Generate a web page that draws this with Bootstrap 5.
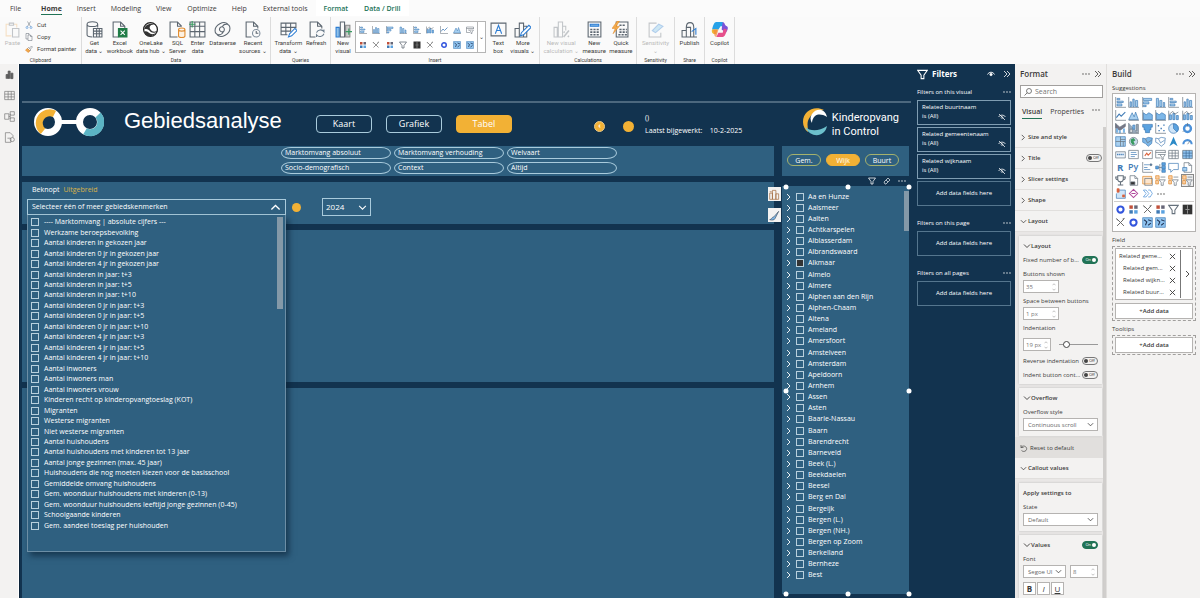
<!DOCTYPE html>
<html lang="nl">
<head>
<meta charset="utf-8">
<meta name="viewport" content="width=device-width, initial-scale=1">
<title>Gebiedsanalyse</title>
<link href="https://cdn.jsdelivr.net/npm/bootstrap@5.3.0/dist/css/bootstrap.min.css" rel="stylesheet">
<style>
:root{--navy:#12334f;--panel:#2f6080;--amber:#f2b135;--ice:#a9cbdc;--pane:#f3f2f1;--ink:#3b3a39;--green:#217356}
body{font:7px/10px "Open Sans","Noto Sans",sans-serif;color:var(--ink);background:var(--pane)}
button,input,select{font:inherit;color:inherit;margin:0}
button{background:none;border:0;padding:0}
svg{display:block;flex:none;fill:none;stroke:currentColor}
.ic-s{width:8px;height:8px}.ic-m{width:11px;height:11px}.ic-l{width:17px;height:17px}
.work{min-height:0}
/* ribbon */
.ribbon-tabs{background:#fbfbfb;padding-left:2px;height:17px}
.ribbon-tabs button{padding:2px 8px 0;height:16px;position:relative}
.ribbon-tabs .on{font-weight:700;padding-right:7px}
.ribbon-tabs .on::after{content:"";position:absolute;left:8px;right:7px;bottom:1px;height:1px;background:var(--green)}
.ribbon-tabs .tight{padding-right:7px}
.ribbon-tabs .ctx{color:var(--green);font-weight:600;background:#fff}
.ribbon{background:#fafafa;height:47px;font:6px/8px Roboto,sans-serif}
.ribbon svg{stroke:#5c6670}
.grp{border-right:1px solid #dcdcdc;height:47px;flex:none}
.grp-body{height:40px;padding-top:4px}
.grp-name{font-size:5px;line-height:6px;text-align:center}
.g-clip{width:82px}.g-data{width:189px}.g-query{width:60px}.g-ins{width:209px}.g-calc{width:97px}.g-sens{width:38px}.g-one{width:30px}
.tool{display:flex;flex-direction:column;align-items:center;text-align:center;gap:1px;white-space:nowrap}
.dim{opacity:.35}
.gallery{border:1px solid #b5b5b5;width:131px;height:32px;background:#fff}
.gallery-grid{display:grid;grid-template-columns:repeat(9,1fr);flex:1;place-items:center}
.gallery-more{border-left:1px solid #b5b5b5;width:8px}
/* rail */
.rail{width:19px;padding-top:5px;gap:10px;border-right:1px solid #fff;color:#777}
/* report canvas */
.canvas{background:var(--navy);color:#fff;padding-left:2px;border-left:1px solid #0b2238}
.canvas-top{height:39px;border-bottom:2px solid #4c687e}
.head{height:43px;padding:0 12px 0 12px}
.head h1{font:22px/28px "Liberation Sans",Arial,sans-serif;margin:0 0 0 20px;width:192px}
.pill-btn{width:56px;height:18px;border:1px solid var(--ice);border-radius:4px;font-size:9px;line-height:14px;margin:8px 14px 0 0}
.pill-btn.on{background:var(--amber);border-color:var(--amber)}
.dot{border-radius:50%;background:var(--amber);width:11px;height:11px;flex:none}
.dot.lined{border:1px solid #e8c98a;line-height:8px;font-weight:700}
.dot.tiny{width:9px;height:9px;margin-left:6px}
.dots{margin:10px 0 0 68px;gap:18px}
.upd{margin:8px 0 0 11px;line-height:13px}
.logo-text{font:11px/14px Roboto,sans-serif;padding-top:4px}
.rightcol{width:127px;flex:none;margin-right:2px}
.tile{background:var(--panel)}
.stack{gap:6px}
.chips{height:30px;padding:1px 0 0 259px}
.chips-grid{display:grid;grid-template-columns:repeat(3,110px);gap:3px}
.chips button{border:1px solid var(--ice);border-radius:10px/6px;height:12px;line-height:10px;text-align:left;padding-left:3px}
.pick{height:42px;padding:2px 5px}
.pick-tabs{padding:1px 0 0 1px}
.pick .adv{color:#d9b24a}
.pick-row{margin-top:3px}
.field-drop{width:259px;height:16px;border:1px solid var(--ice);padding:0 4px}
.fields-menu{position:absolute;top:100%;left:0;width:259px;height:337px;background:var(--panel);border:1px solid #6c8ea5;border-top:0;box-shadow:3px 4px 6px rgba(8,30,50,.6);z-index:5;padding:2px 2px 20px 3px}
.fields-list{display:grid;grid-auto-rows:1fr;height:314px;flex:1}
.fields-list label,.tree label{display:flex;align-items:center;white-space:nowrap;min-height:0}
.fields-list label{gap:5px}
.bar{width:6px;height:92px;background:#8499a8}
input.box{appearance:none;width:8px;height:8px;border:1px solid #b8d0dd;flex:none}
input.box:checked{background:#333}
.year{appearance:none;background:none;border:1px solid var(--ice);width:49px;height:18px;padding:0 3px;color:#fff;font-size:8px;border-radius:0}
.year-wrap{margin-left:21px}
.mid{flex:152 1 0}.low{flex:210 1 0}
.lvl{height:30px;gap:5px;padding:0 5px 2px}
.lvl button{width:34px;height:12px;border:1px solid #a5b26d;border-radius:6px;line-height:9px}
.lvl .on{background:var(--amber);border-color:var(--amber)}
.visbar{height:10px;gap:7px;padding:0 3px}
.tree{display:grid;grid-auto-rows:1fr;height:390px;margin-top:5px}
.tree label{gap:3px;padding-left:3px}
.tree label span{padding-left:1px}
.handles{position:absolute;inset:1px 0 0 4px;pointer-events:none}
.hd{position:absolute;width:5px;height:5px;border-radius:50%;background:#fff;transform:translate(-50%,-50%)}
.tree-bar{position:absolute;right:0;top:5px;width:5px;height:40px;background:#8499a8}
.float-ic{position:absolute;right:-7px;top:5px;gap:7px;z-index:4}
.float-ic button{width:13px;height:14px;background:#f3f2f1;color:#555}
/* filters */
.filters{width:104px;background:var(--navy);color:#fff;padding:4px 4px 0 6px;font-size:6px;line-height:9px}
.filters h2{font-size:8px;line-height:12px;font-weight:700;margin:0}
.fcard{border:1px solid #7f9db2;height:25px;padding:2px 4px;margin-bottom:2px}
.fdrop{border:1px solid #55768e;height:25px;width:100%;display:block}
.fsec{height:16px;padding-top:4px}
.fsec.later{margin-top:9px}
/* panes */
.pane{padding:4px 0 0 5px;font-size:6px;line-height:8px}
.pane h2{font-size:8px;line-height:12px;font-weight:600;margin:0}
.fmt{width:92px;border-right:1px solid #e1dfdd}
.search{height:13px;border:1px solid #a19f9d;background:#fff;margin:5px 3px 0 0;padding:0 3px;font-size:7px;gap:3px}
.search input,.spin input{border:0;background:none;padding:0;min-width:0;outline:0}
.ftabs{font-size:7px;height:29px;gap:8px;padding:8px 2px 0}
.ftabs button{padding:0 0 1px;height:13px;line-height:10px;border-bottom:1px solid transparent}
.ftabs .on{font-weight:600;border-bottom:1px solid var(--green)}
.fbody{margin-left:-5px;border-right:3px solid #d0cecc}
.sec{height:21px;width:100%;padding:0 1px 0 5px;font-weight:600;gap:1px;border-bottom:1px solid #e1dfdd}
.chv{width:7px;height:7px}
.well{background:#e9e7e6;padding:4px 1px 1px 4px;display:grid;gap:4px}
.fcard2{background:var(--pane);box-shadow:0 0 2px #bbb;padding:6px 4px 5px}
.spin{border:1px solid #b5b3b1;background:#fff;height:13px;width:36px;padding:0 2px;color:#777}
.spin.sm{width:28px}
.tick{width:4px;height:5px}
.sel{appearance:none;border:1px solid #b5b3b1;background:#fff;height:13px;width:100%;padding:0 4px;color:#666;border-radius:0;display:block}
.selwrap{position:relative}.selwrap svg{position:absolute;right:4px;top:3px;width:7px;height:7px}
.year-wrap svg{width:9px;height:9px;top:5px}
.tgl{width:16px;height:8px;border:1px solid #777;border-radius:4px;font-size:4px;line-height:6px;padding:0 1px;gap:1px}
.tgl input{appearance:none;width:4px;height:4px;border-radius:50%;background:#444}
.tgl.on{background:var(--green);border-color:var(--green);color:#fff;flex-direction:row-reverse}.tgl.on input{background:#fff}
.rng{appearance:none;background:linear-gradient(#999,#999) center/100% 1px no-repeat;height:9px;width:39px}
.rng::-webkit-slider-thumb{appearance:none;width:7px;height:7px;border:1px solid #444;border-radius:50%;background:#fff}
.lab{height:12px;line-height:12px;margin-top:2px}
.lab.first{margin-top:4px}
.gap-row{margin-top:6px}
.fs-btn{width:13px;height:13px;border:1px solid #b5b3b1;background:#fff;font-size:8px;line-height:10px}
.fs-row{gap:1px}
.reset{background:#e1dfdd;height:21px;padding-left:5px;gap:2px;width:100%}
.build{width:93px;padding-right:4px}
.build .sugg svg{stroke:#66717c}
.sugg{background:#fff;border:1px solid #b5b3b1;height:139px;padding:2px 1px;margin-top:1px}
.sugg-grid{display:grid;grid-template-columns:repeat(6,1fr);grid-auto-rows:1fr;place-items:center}
.g8{flex:8}.g2{flex:2;border-top:1px solid #d0cecc;margin-top:1px;padding-top:1px}
.chosen{outline:1px solid #888;background:#eee}
.wname{margin:4px 0 2px}
.dash{border:1px dashed #a19f9d;padding:1px 2px}
.wbox{border:1px solid #b5b3b1;background:#fff;width:100%}
.wbox + .add{margin-top:3px}
.add{height:16px;font-weight:600}
.rel{height:12px;padding:0 4px 0 3px}.rel.sub{padding-left:7px}.rel svg{width:7px;height:7px}
#rel{border-right:1px solid #777;margin:1px 3px 1px 0}
</style>
</head>
<body class="vh-100 overflow-hidden d-flex flex-column">
<svg class="d-none">
<symbol id="paste" viewBox="0 0 16 16"><path d="M5 3H2v11h5M9 3h3v3" stroke="#f0b060"/><path d="M5 2h4v2H5zM8 7h6v8H8z"/></symbol>
<symbol id="cut" viewBox="0 0 16 16"><path d="M5 1l6 10M11 1L5 11"/><circle cx="4" cy="13" r="2" stroke="#2b7cd3"/><circle cx="12" cy="13" r="2" stroke="#2b7cd3"/></symbol>
<symbol id="copy" viewBox="0 0 16 16"><path d="M6 12H2V1h6v3M6 4h5l3 3v8H6zM11 4v3h3"/></symbol>
<symbol id="brush" viewBox="0 0 16 16"><path d="M9 6l4-4 2 2-4 4M7 5l5 5-2 2-5-5z"/><path d="M5 7l-4 3 5 5 4-3z" fill="#f2a94a" stroke="#d97b1e"/></symbol>
<symbol id="db" viewBox="0 0 16 16"><path d="M1 3c0-3 10-3 10 0s-10 3-10 0v10c0 1 2 2 5 2M11 3v3"/><path d="M7 7h8v8H7zM7 9.500h8M7 12h8M10 7v8M12.500 7v8"/></symbol>
<symbol id="excel" viewBox="0 0 16 16"><path d="M7 15H2V1h7l4 4v2M9 1v4h4"/><path d="M7 7h8v8H7z" fill="#1e7b45" stroke="#1e7b45"/><path d="M9 9l4 4M13 9l-4 4" stroke="#fff"/></symbol>
<symbol id="lake" viewBox="0 0 16 16"><circle cx="8" cy="8" r="6.500" stroke="#222" stroke-width="1.200" fill="#fff"/><path d="M2 8c1-5 6-6 11-5-5 0-7 2-5 5 2 3 5 2 7 1-2 3-5 2-7 1-2-2-3-3-6-2z" fill="#333" stroke="none"/><path d="M2 10c3-1 4 1 6 2s4 0 5-1c-2 4-9 5-11-1z" fill="#333" stroke="none"/></symbol>
<symbol id="sql" viewBox="0 0 16 16"><path d="M8 15H1V1h7l4 4M8 1v4h4"/><path d="M9 8c0-2 6-2 6 0s-6 2-6 0v6c0 2 6 2 6 0V8" stroke="#e08a2c" fill="#fdf1e2"/></symbol>
<symbol id="enter" viewBox="0 0 16 16"><path d="M1 1h14v14H1zM1 5h14M1 10h14M5.500 1v14M10 1v14"/><path d="M3 0v6M0 3h6" stroke="#3a9a61"/></symbol>
<symbol id="dverse" viewBox="0 0 16 16"><path d="M13 3C9-1 1 4 1 9c0 5 6 5 8 1 2-3-1-6-3-4s0 5 3 4M3 13c4 4 12-1 12-6s-5-5-7-2"/></symbol>
<symbol id="recent" viewBox="0 0 16 16"><path d="M7 15H2V1h7l4 4v2M9 1v4h4"/><circle cx="11.500" cy="11.500" r="3.500" stroke="#7d8b99"/><path d="M11.500 9.500v2h2"/></symbol>
<symbol id="transform" viewBox="0 0 16 16"><path d="M7 13H1V2h14v5M1 6h14M1 9.500h9M5.500 2v11M10 2v8"/><path d="M8 15l1-3 5-5 2 2-5 5z" stroke="#2b7cd3" fill="#fff"/></symbol>
<symbol id="refresh" viewBox="0 0 16 16"><path d="M7 15H2V1h7l4 4v2M9 1v4h4"/><path d="M8 11a4 4 0 0 1 7-1v-2M15 12a4 4 0 0 1-7 1v2" stroke="#6b7c8c"/></symbol>
<symbol id="newvis" viewBox="0 0 16 16"><path d="M1 6h3v9H1z" fill="#8fc0e8" stroke="#2b7cd3"/><path d="M5 1h4v14H5z"/><path d="M10 4h4v11h-4z" stroke="#888" fill="#ccc"/><path d="M13 7v6M10 10h6" stroke="#3a9a61"/></symbol>
<symbol id="visedit" viewBox="0 0 16 16"><path d="M1 6h4v9H1zM5 2h5v13H5zM10 7h4v8h-4zM1 4h3" stroke="#a0683a"/></symbol>
<symbol id="newcalc" viewBox="0 0 16 16"><path d="M1 6h3v9H1zM5 1h4v14H5zM9 5h3v4"/><path d="M10 15l5-6M10 10l1 1M14 14l1 1" stroke-width="1.500"/></symbol>
<symbol id="textbox" viewBox="0 0 16 16"><path d="M1 2h14v12H1z"/><path d="M5 12l3-8 3 8M6 9h4" stroke="#2b7cd3"/></symbol>
<symbol id="morevis" viewBox="0 0 16 16"><path d="M1 7h4v8H1zM5 2h4v13H5zM9 5h3v10H9z"/><path d="M6 14l1-3 7-7 2 2-7 7z" stroke="#2b7cd3" fill="#fff"/></symbol>
<symbol id="paint" viewBox="0 0 16 16"><path d="M1 14c3 0 3-4 6-4l7-8-5 10c-1 3-5 3-8 2z" fill="#7db7e8" stroke="#456"/></symbol>
<symbol id="calc" viewBox="0 0 16 16"><path d="M2 1h12v14H2z"/><path d="M4 3h8v2H4z" fill="#7db7e8" stroke="#2b7cd3"/><path d="M4 8h8M4 10.500h8M4 13h8" stroke-dasharray="2 1" stroke-width="1.500"/></symbol>
<symbol id="quick" viewBox="0 0 16 16"><path d="M4 1h11v14H4z"/><path d="M7 4h6M7 8h7M7 10.500h7M6 13h8" stroke-dasharray="2 1" stroke-width="1.500"/><path d="M5 0L0 7h3l-2 5 6-7H4l3-5z" fill="#f2a94a" stroke="#e08a2c" stroke-width=".5"/></symbol>
<symbol id="sens" viewBox="0 0 16 16"><path d="M9 2H2v13h11v-4"/><path d="M5 9l6-6 4 2-7 6z" fill="#7cc4ea" stroke="#2b7cd3"/></symbol>
<symbol id="publish" viewBox="0 0 16 16"><path d="M1 9h4v6H1zM5 6h4v9H5zM5 6c0-6 7-6 7 0v9H9M12 15h3"/><path d="M10 10l4-3v6" stroke="#2b7cd3"/></symbol>
<symbol id="copilot" viewBox="0 0 16 16"><g stroke="none"><path d="M5 1h6l2 4H9L7 8H1c1-4 2-7 4-7z" fill="#27a2e8"/><path d="M1 8h5l-1 4c-3 1-5-1-4-4z" fill="#f2b934"/><path d="M11 1c2 0 2 4 4 4 2 1 0 5-1 6l-4-3z" fill="#7b52d8"/><path d="M15 8c-1 4-2 7-4 7H5l2-4h4l1-4z" fill="#e6508c"/><path d="M2 8l5 0-2 7c-2 0-2-3-3-7z" fill="#f2893a" opacity=".7"/></g></symbol>
<symbol id="funnel" viewBox="0 0 16 16"><path d="M1 2h14L10 9v5H6V9z" stroke-width="1.500"/></symbol>
<symbol id="chev-d" viewBox="0 0 16 16"><path d="M2 5l6 6 6-6" stroke-width="1.800"/></symbol>
<symbol id="chev-u" viewBox="0 0 16 16"><path d="M2 11l6-6 6 6" stroke-width="1.800"/></symbol>
<symbol id="chev-r" viewBox="0 0 16 16"><path d="M4 2l6 6-6 6" stroke-width="1.800"/></symbol>
<symbol id="dbl" viewBox="0 0 16 16"><path d="M2 2l6 6-6 6M8 2l6 6-6 6" stroke-width="1.600"/></symbol>
<symbol id="more" viewBox="0 0 16 16"><g fill="currentColor" stroke="none"><circle cx="2" cy="8" r="1.300"/><circle cx="8" cy="8" r="1.300"/><circle cx="14" cy="8" r="1.300"/></g></symbol>
<symbol id="eye" viewBox="0 0 16 16"><path d="M1 9c3-6 11-6 14 0" stroke-width="1.800"/><circle cx="8" cy="9" r="2.500" fill="currentColor"/></symbol>
<symbol id="eyeoff" viewBox="0 0 16 16"><path d="M1 8c3-5 11-5 14 0M2 2l12 12" stroke-width="1.500"/><circle cx="8" cy="9" r="2"/></symbol>
<symbol id="erase" viewBox="0 0 16 16"><path d="M2 10l8-8 4 4-8 8H4zM6 6l4 4" stroke-width="1.300"/></symbol>
<symbol id="lens" viewBox="0 0 16 16"><circle cx="10" cy="6" r="5" stroke-width="1.300"/><path d="M6.500 9.500L1 15" stroke-width="1.300"/></symbol>
<symbol id="undo" viewBox="0 0 16 16"><path d="M2 2v5h5M2 7c5-7 15 0 10 6-3 3-7 2-9 0" stroke-width="1.300"/></symbol>
<symbol id="xx" viewBox="0 0 16 16"><path d="M2 2l12 12M14 2L2 14" stroke-width="2"/></symbol>
<symbol id="rail1" viewBox="0 0 16 16"><path d="M3 14V8h3v6M6 14V3h3v11M10 14V6h3v8z" fill="#666" stroke="#555"/></symbol>
<symbol id="rail3" viewBox="0 0 16 16"><path d="M1 4h6v8H1zM9 1h6v5H9zM9 10h6v5H9zM7 8h2M9 4v8"/></symbol>
<symbol id="rail4" viewBox="0 0 16 16"><path d="M10 15H2V1h7l4 4v3M5 9h5v6"/><circle cx="12" cy="11" r="3"/></symbol>
<symbol id="bh" viewBox="0 0 16 16"><path d="M1 0v15h15"/><path d="M3 2h4v2H3zM3 6h9v2H3zM3 10h7v3H3z" fill="#a8d0f0" stroke="#3f7ab5"/></symbol>
<symbol id="bv" viewBox="0 0 16 16"><path d="M1 0v15h15"/><path d="M3 7h2v7H3zM7 3h2v11H7zM11 5h3v9h-3z" fill="#a8d0f0" stroke="#3f7ab5"/></symbol>
<symbol id="bh2" viewBox="0 0 16 16"><path d="M1 0v15"/><path d="M2 2h12v3H2zM2 7h8v3H2zM2 12h4v2H2z" fill="#a8d0f0" stroke="#3f7ab5"/></symbol>
<symbol id="bv2" viewBox="0 0 16 16"><path d="M1 15h15"/><path d="M2 2h3v12H2zM7 5h3v9H7zM12 8h2v6h-2z" fill="#a8d0f0" stroke="#3f7ab5"/></symbol>
<symbol id="line" viewBox="0 0 16 16"><path d="M1 0v15h15"/><path d="M2 11l4-5 3 3 6-6" stroke="#3f7ab5" stroke-width="1.500"/></symbol>
<symbol id="area" viewBox="0 0 16 16"><path d="M1 14l5-10 3 6 2-7 4 11z" fill="#a8d0f0" stroke="#3f7ab5"/><path d="M1 15h15"/></symbol>
<symbol id="area2" viewBox="0 0 16 16"><path d="M2 4l4 3 4-3 5 3v7H2z" fill="#7db7e8" stroke="#3f7ab5"/><path d="M1 0v15h15"/></symbol>
<symbol id="combo" viewBox="0 0 16 16"><path d="M2 7h3v7H2zM7 5h3v9H7zM12 8h3v6h-3z" fill="#7db7e8" stroke="#3f7ab5"/><path d="M1 15V1M2 6l5-4 3 4 5-3"/></symbol>
<symbol id="ribb" viewBox="0 0 16 16"><path d="M1 1l6 5 8-5v4l-8 6-6-4z" fill="#778"/><path d="M3 8v6M7 11v4M13 8v6" stroke="#7db7e8" stroke-width="3"/><path d="M1 0v15h15"/></symbol>
<symbol id="wfall" viewBox="0 0 16 16"><path d="M1 0v15h15M3 9h3v5H3zM12 2h3v12h-3z" fill="#9ab"/><path d="M7 3h3v6H7z" fill="#7db7e8" stroke="#3f7ab5"/></symbol>
<symbol id="fun" viewBox="0 0 16 16"><path d="M1 2h14v4h-2v4h-2v4H5v-4H3V6H1z" fill="#5aa2e0" stroke="#3f7ab5"/></symbol>
<symbol id="scat" viewBox="0 0 16 16"><path d="M1 0v15h15"/><path d="M4 4h2M8 8h2M12 3h2M5 11h2M12 11h2" stroke="#3f7ab5" stroke-width="2"/></symbol>
<symbol id="pie" viewBox="0 0 16 16"><circle cx="8" cy="8" r="7" fill="#cfe5f8" stroke="#3f7ab5"/><path d="M8 8V1a7 7 0 0 1 5 12z" fill="#5aa2e0" stroke="#3f7ab5"/></symbol>
<symbol id="donut" viewBox="0 0 16 16"><circle cx="8" cy="8" r="5" stroke="#4a90d9" stroke-width="3.500"/><path d="M8 0v5M3 11l-2 2"/></symbol>
<symbol id="treemap" viewBox="0 0 16 16"><path d="M1 1h14v14H1z" fill="#a8d0f0" stroke="#3f7ab5"/><path d="M8 1v14M1 8h14M8 5h7M12 8v7"/></symbol>
<symbol id="globe" viewBox="0 0 16 16"><circle cx="8" cy="8" r="6" fill="#cde"/><path d="M4 5l4-2 3 3-3 2 2 4-3 1-3-4z" fill="#3a9a61" stroke="none"/></symbol>
<symbol id="map" viewBox="0 0 16 16"><path d="M1 3l4 1 4-2 6 1-1 8-5 4-4-4-4-2z" fill="#7db7e8" stroke="#3f7ab5"/><path d="M5 4l3 6 6-4"/></symbol>
<symbol id="map2" viewBox="0 0 16 16"><path d="M1 3l4 1 4-2 6 1-1 8-5 4-4-4-4-2zM5 4l3 6 6-4" stroke="#4a7fb5"/></symbol>
<symbol id="nav" viewBox="0 0 16 16"><path d="M8 1l6 14-6-4-6 4z" fill="#2b8ac8" stroke="none"/></symbol>
<symbol id="gauge" viewBox="0 0 16 16"><path d="M2 12a6 6 0 0 1 12 0" stroke="#4a90d9" stroke-width="3"/><path d="M8 12l4-5"/></symbol>
<symbol id="card1" viewBox="0 0 16 16"><path d="M1 4h14v9H1z" fill="#eef5fc"/><path d="M3 8h10" stroke-dasharray="2 1" stroke="#3f7ab5" stroke-width="2"/></symbol>
<symbol id="card2" viewBox="0 0 16 16"><path d="M1 2h14v12H1z"/><path d="M4 5h8M4 8h9M4 11h6" stroke="#3f7ab5"/></symbol>
<symbol id="kpi" viewBox="0 0 16 16"><path d="M1 2h14v12H1z"/><path d="M4 10l3-4 2 3 4-4" stroke="#d9603a" stroke-width="1.500"/></symbol>
<symbol id="slic" viewBox="0 0 16 16"><path d="M8 13H1V2h14v4M1 5h14M4 8h3"/><path d="M7 8h8l-3 4v3h-2v-3z" fill="#fff"/></symbol>
<symbol id="tbl" viewBox="0 0 16 16"><path d="M1 2h14v12H1zM1 6h14M1 10h14M6 2v12M10.500 2v12"/></symbol>
<symbol id="mtx" viewBox="0 0 16 16"><path d="M1 2h14v12H1z" fill="#8fc4f0"/><path d="M1 6h14M1 10h14M6 2v12M10.500 2v12" stroke="#3f6a95"/></symbol>
<symbol id="tR" viewBox="0 0 16 16"><text x="3" y="13" font-size="14" font-weight="700" fill="#3f7ab5" stroke="none">R</text></symbol>
<symbol id="tPy" viewBox="0 0 16 16"><text x="0" y="12" font-size="13" font-weight="600" fill="#3f7ab5" stroke="none">Py</text></symbol>
<symbol id="infl" viewBox="0 0 16 16"><path d="M1 0v15h15"/><path d="M3 4h8M3 8h5M3 11h9" stroke="#3f7ab5"/><circle cx="13" cy="4" r="1.500" fill="#3f7ab5"/></symbol>
<symbol id="deco" viewBox="0 0 16 16"><path d="M1 6h4v4H1zM10 1h5v4h-5zM10 6h5v4h-5zM10 11h5v4h-5z" fill="#5aa2e0" stroke="#3f7ab5"/><path d="M5 8h5M7 3v10"/></symbol>
<symbol id="qa" viewBox="0 0 16 16"><path d="M1 2h14v9H8l-4 4v-4H1z" stroke="#3f7ab5"/></symbol>
<symbol id="doc" viewBox="0 0 16 16"><path d="M3 1h7l4 4v10H3zM10 1v4h4"/><path d="M1 8h6v5H1z" fill="#a8d0f0" stroke="#3f7ab5"/></symbol>
<symbol id="cup" viewBox="0 0 16 16"><path d="M4 1h8v5c0 5-8 5-8 0zM4 3H1c0 3 1 4 3 4M12 3h3c0 3-1 4-3 4M8 10v4M4 14.500h8" stroke-width="1.500"/></symbol>
<symbol id="pag" viewBox="0 0 16 16"><path d="M3 1h7l4 4v10H3zM10 1v4h4"/><path d="M4 10h6v4H4z" fill="#333"/></symbol>
<symbol id="oslic" viewBox="0 0 16 16"><path d="M1 2h13v11H1z" fill="#fde5cc" stroke="#e08a2c"/><path d="M4 5h11v10H4z"/></symbol>
<symbol id="oslic2" viewBox="0 0 16 16"><path d="M1 1h5v5H1zM1 8h4v5H1z" fill="#fbd0a8" stroke="#e08a2c"/><path d="M8 3h7M6 7h9l-3 4v4h-3v-4z"/></symbol>
<symbol id="pin" viewBox="0 0 16 16"><path d="M4 3h11v12H2V8" fill="#cfe5f8" stroke="#3f7ab5"/><path d="M3 1h3v5H3zM11 10h3v3h-3z" fill="#d9603a" stroke="#d9603a"/></symbol>
<symbol id="dia" viewBox="0 0 16 16"><path d="M8 2l6 6-6 6-6-6zM5 8h6" stroke="#b0489c" stroke-width="1.500"/></symbol>
<symbol id="flow" viewBox="0 0 16 16"><path d="M2 3h4l4 5-4 5H2l4-5zM9 3h3l3 5-3 5H9" stroke="#4a90d9"/></symbol>
<symbol id="ring" viewBox="0 0 16 16"><circle cx="8" cy="8" r="4.500" stroke="#3355dd" stroke-width="3"/></symbol>
<symbol id="four" viewBox="0 0 16 16"><g stroke="none"><path d="M2 2h5v5H2z" fill="#c0503a"/><path d="M9 2h5v5H9z" fill="#667"/><path d="M2 9h5v5H2z" fill="#3f7ab5"/><path d="M9 9h5v5H9z" fill="#5aa2e0"/></g></symbol>
<symbol id="tools" viewBox="0 0 16 16"><path d="M3 3l10 10M13 3L3 13M2 2l2 3M14 2l-3 1" stroke="#666" stroke-width="1.400"/></symbol>
<symbol id="dark" viewBox="0 0 16 16"><path d="M1 1h14v14H1z" fill="#333" stroke="none"/><path d="M8 2v5M8 9v5M5 8h6" stroke="#bbb"/></symbol>
<symbol id="blue" viewBox="0 0 16 16"><path d="M1 1h14v14H1z" fill="#8fc4f0" stroke="#3f7ab5"/><path d="M3 4l4 3-2 5M9 4l5 2M9 12l4-3" stroke="#235" stroke-width="1.500"/></symbol>
</svg>

<header>
<nav class="ribbon-tabs d-flex">
<button class="me-1">File</button><button class="on">Home</button><button class="tight">Insert</button><button class="tight">Modeling</button><button>View</button><button class="tight">Optimize</button><button>Help</button><button>External tools</button><button class="ctx">Format</button><button class="ctx">Data / Drill</button>
</nav>
<div class="ribbon d-flex" id="ribbon">
<section class="grp g-clip"><div class="grp-body d-flex ps-1 gap-1">
<button class="tool dim"><svg class="ic-l"><use href="#paste"/></svg>Paste</button>
<div class="d-flex flex-column justify-content-between pb-1 text-nowrap">
<button class="d-flex"><svg class="ic-s me-1"><use href="#cut"/></svg>Cut</button>
<button class="d-flex"><svg class="ic-s me-1"><use href="#copy"/></svg>Copy</button>
<button class="d-flex"><svg class="ic-s me-1"><use href="#brush"/></svg>Format painter</button>
</div></div><div class="grp-name">Clipboard</div></section>
</div>
</header>

<main class="work d-flex flex-fill">
<nav class="rail d-flex flex-column align-items-center" aria-label="Weergaven">
<button aria-label="Rapport"><svg class="ic-m"><use href="#rail1"/></svg></button>
<button aria-label="Tabel"><svg class="ic-m"><use href="#tbl"/></svg></button>
<button aria-label="Model"><svg class="ic-m"><use href="#rail3"/></svg></button>
<button aria-label="DAX"><svg class="ic-m"><use href="#rail4"/></svg></button>
</nav>

<section class="canvas flex-fill d-flex flex-column">
<div class="canvas-top"></div>
<div class="head d-flex">
<svg width="70" height="30" viewBox="0 0 70 30" class="mt-1" stroke-width="7"><path d="M23 15h24" stroke="#fff" stroke-width="4"/><circle cx="14" cy="15" r="10.500" stroke="#fff"/><path d="M9 24.200A10.500 10.500 0 0 1 20.500 6.800" stroke="#f2b135"/><circle cx="56" cy="15" r="10.500" stroke="#fff"/><path d="M64 8a10.500 10.500 0 0 1-13 16.200" stroke="#5bb4c4"/></svg>
<h1 class="pt-1">Gebiedsanalyse</h1>
<div class="d-flex pt-1"><button class="pill-btn">Kaart</button><button class="pill-btn">Grafiek</button><button class="pill-btn on">Tabel</button></div>
<div class="dots d-flex pt-2"><span class="dot lined text-center">‹</span><span class="dot"></span></div>
<div class="upd"><div>()</div><div>Laatst bijgewerkt: &nbsp; &nbsp;10-2-2025</div></div>
<div class="ms-auto d-flex gap-1 pt-1">
<svg width="26" height="30" viewBox="0 0 26 30"><g stroke="none"><path d="M22 3C12-2 1 4 1 15c0 4 2 8 5 10 0-5-2-10 2-15 3-4 8-6 14-7z" fill="#f2b135"/><path d="M10 7c4-6 13-6 15 3-5-3-9-3-12-1-2 2-3 4-3 7-2-3-2-6 0-9z" fill="#fff"/><path d="M3 20c5 4 13 5 22-1-2 11-16 13-22 1z" fill="#6cc0cc"/></g></svg>
<div class="logo-text">Kinderopvang<br>in Control</div></div>
</div>

<div class="d-flex flex-fill gap-2">
<div class="stack flex-fill d-flex flex-column">
<div class="tile chips"><div class="chips-grid">
<button>Marktomvang absoluut</button><button>Marktomvang verhouding</button><button>Welvaart</button><button>Socio-demografisch</button><button>Context</button><button>Altijd</button></div></div>
<div class="tile pick position-relative">
<div class="pick-tabs"><a href="#" class="text-white text-decoration-none ms-1 me-1">Beknopt</a><a href="#" class="adv text-decoration-none">Uitgebreid</a></div>
<div class="pick-row d-flex align-items-center">
<div class="position-relative">
<button class="field-drop d-flex align-items-center justify-content-between" aria-expanded="true">Selecteer één of meer gebiedskenmerken<svg class="ic-m"><use href="#chev-u"/></svg></button>
<div class="fields-menu d-flex"><div class="fields-list" id="fields"></div><div class="bar"></div></div>
</div>
<span class="dot tiny"></span>
<div class="selwrap year-wrap"><select class="year" aria-label="Jaar"><option>2024</option></select><svg><use href="#chev-d"/></svg></div>
</div>
<div class="float-ic d-flex flex-column"><button class="d-flex align-items-center justify-content-center" aria-label="Velden"><svg class="ic-m"><use href="#visedit"/></svg></button><button class="d-flex align-items-center justify-content-center" aria-label="Opmaak"><svg class="ic-m"><use href="#paint"/></svg></button></div>
</div>
<div class="tile mid"></div>
<div class="tile low"></div>
</div>
<div class="rightcol d-flex flex-column">
<div class="tile lvl d-flex align-items-center justify-content-start"><button>Gem.</button><button class="on">Wijk</button><button>Buurt</button></div>
<div class="visbar d-flex justify-content-end align-items-center"><svg class="ic-s"><use href="#funnel"/></svg><svg class="ic-s"><use href="#erase"/></svg><svg class="ic-s"><use href="#more"/></svg></div>
<div class="tile flex-fill position-relative mb-1"><div class="tree" id="tree"></div><div class="tree-bar"></div>
<div class="handles"><i class="hd start-0 top-0"></i><i class="hd start-50 top-0"></i><i class="hd start-100 top-0"></i><i class="hd start-0 top-50"></i><i class="hd start-100 top-50"></i><i class="hd start-0 top-100"></i><i class="hd start-50 top-100"></i><i class="hd start-100 top-100"></i></div></div>
</div>
</div>
</section>

<aside class="filters flex-shrink-0">
<div class="d-flex align-items-center gap-1"><svg class="ic-m"><use href="#funnel"/></svg><h2 class="flex-fill">Filters</h2><svg class="ic-s me-1"><use href="#eye"/></svg><svg class="ic-s"><use href="#dbl"/></svg></div>
<div class="fsec d-flex justify-content-between mt-1">Filters on this visual<svg class="ic-s"><use href="#more"/></svg></div>
<div id="fcards"></div>
<button class="fdrop">Add data fields here</button>
<div class="fsec later d-flex justify-content-between">Filters on this page<svg class="ic-s"><use href="#more"/></svg></div>
<button class="fdrop">Add data fields here</button>
<div class="fsec later d-flex justify-content-between">Filters on all pages<svg class="ic-s"><use href="#more"/></svg></div>
<button class="fdrop">Add data fields here</button>
</aside>

<aside class="pane fmt flex-shrink-0">
<div class="d-flex align-items-center gap-1"><h2 class="flex-fill">Format</h2><svg class="ic-s"><use href="#more"/></svg><svg class="ic-s me-1"><use href="#dbl"/></svg></div>
<div class="search d-flex align-items-center"><svg class="ic-s"><use href="#lens"/></svg><input class="w-100" type="search" placeholder="Search" aria-label="Search"></div>
<div class="ftabs d-flex"><button class="on">Visual</button><button>Properties</button><svg class="ic-s ms-auto me-1"><use href="#more"/></svg></div>
<div class="fbody">
<button class="sec d-flex align-items-center"><svg class="chv"><use href="#chev-r"/></svg>Size and style</button>
<div class="sec d-flex align-items-center"><svg class="chv"><use href="#chev-r"/></svg><span class="flex-fill">Title</span><label class="tgl d-flex align-items-center fw-normal"><input type="checkbox" aria-label="Title">Off</label></div>
<button class="sec d-flex align-items-center"><svg class="chv"><use href="#chev-r"/></svg>Slicer settings</button>
<button class="sec d-flex align-items-center"><svg class="chv"><use href="#chev-r"/></svg>Shape</button>
<button class="sec d-flex align-items-center"><svg class="chv"><use href="#chev-d"/></svg>Layout</button>
<div class="well">
<div class="fcard2">
<div class="fw-semibold d-flex"><svg class="ic-s"><use href="#chev-d"/></svg>Layout</div>
<div class="d-flex align-items-center justify-content-between gap-row"><span>Fixed number of b...</span><label class="tgl on d-flex align-items-center"><input type="checkbox" checked aria-label="Fixed number of buttons">On</label></div>
<label class="lab first d-block" for="bs">Buttons shown</label><div class="spin d-flex align-items-center"><input id="bs" class="w-100" value="35"><span class="sp"></span></div>
<label class="lab d-block" for="sb">Space between buttons</label><div class="spin d-flex align-items-center"><input id="sb" class="w-100" value="1 px"><span class="sp"></span></div>
<label class="lab d-block" for="ind">Indentation</label><div class="d-flex gap-2 align-items-center mt-1"><div class="spin sm d-flex align-items-center"><input id="ind" class="w-100" value="19 px"><span class="sp"></span></div><input type="range" class="rng" value="12" aria-label="Indentation"></div>
<div class="d-flex align-items-center justify-content-between gap-row"><span>Reverse indentation</span><label class="tgl d-flex align-items-center"><input type="checkbox" aria-label="Reverse indentation">Off</label></div>
<div class="d-flex align-items-center justify-content-between gap-row"><span>Indent button cont...</span><label class="tgl d-flex align-items-center"><input type="checkbox" aria-label="Indent button content">Off</label></div>
</div>
<div class="fcard2">
<div class="fw-semibold d-flex"><svg class="ic-s"><use href="#chev-d"/></svg>Overflow</div>
<label class="lab first d-block" for="os">Overflow style</label><div class="selwrap"><select class="sel" id="os"><option>Continuous scroll</option></select><svg><use href="#chev-d"/></svg></div>
</div>
</div>
<button class="reset d-flex align-items-center"><svg class="ic-s"><use href="#undo"/></svg>Reset to default</button>
<button class="sec d-flex align-items-center"><svg class="chv"><use href="#chev-d"/></svg>Callout values</button>
<div class="well">
<div class="fcard2"><div class="fw-semibold">Apply settings to</div>
<label class="lab first d-block" for="st">State</label><div class="selwrap"><select class="sel" id="st"><option>Default</option></select><svg><use href="#chev-d"/></svg></div></div>
<div class="fcard2">
<div class="fw-semibold d-flex"><svg class="ic-s"><use href="#chev-d"/></svg><span class="flex-fill">Values</span><label class="tgl on d-flex align-items-center fw-normal"><input type="checkbox" checked aria-label="Values">On</label></div>
<label class="lab first d-block" for="fn">Font</label><div class="d-flex gap-1"><div class="selwrap flex-fill"><select class="sel" id="fn"><option>Segoe UI</option></select><svg><use href="#chev-d"/></svg></div><div class="spin sm d-flex align-items-center"><input class="w-100" value="8" aria-label="Size"><span class="sp"></span></div></div>
<div class="fs-row d-flex mt-1"><button class="fs-btn fw-bold">B</button><button class="fs-btn fst-italic">I</button><button class="fs-btn text-decoration-underline">U</button></div>
</div>
</div>
</div>
</aside>

<aside class="pane build flex-shrink-0">
<div class="d-flex align-items-center gap-1"><h2 class="flex-fill">Build</h2><svg class="ic-s"><use href="#more"/></svg><svg class="ic-s"><use href="#dbl"/></svg></div>
<div class="mt-1">Suggestions</div>
<div class="sugg d-flex flex-column"><div class="sugg-grid g8" id="s1"></div><div class="sugg-grid g2" id="s2"></div></div>
<div class="wname">Field</div>
<div class="dash">
<div class="wbox d-flex align-items-center"><div class="flex-fill" id="rel"></div><svg class="ic-s"><use href="#chev-r"/></svg></div>
<button class="wbox add">+Add data</button></div>
<div class="wname">Tooltips</div>
<div class="dash"><button class="wbox add">+Add data</button></div>
</aside>
</main>

<script>
const $ = id => document.getElementById(id);
const ic = (n, c = 'ic-m') => `<svg class="${c}"><use href="#${n}"/></svg>`;
const groups = [
 ['g-data','Data',[['db','Get<br>data ⌄'],['excel','Excel<br>workbook'],['lake','OneLake<br>data hub ⌄'],['sql','SQL<br>Server'],['enter','Enter<br>data'],['dverse','Dataverse'],['recent','Recent<br>sources ⌄']]],
 ['g-query','Queries',[['transform','Transform<br>data ⌄'],['refresh','Refresh']]],
 ['g-ins','Insert',[['newvis','New<br>visual'],'gallery',['textbox','Text<br>box'],['morevis','More<br>visuals ⌄']]],
 ['g-calc','Calculations',[['newcalc','New visual<br>calculation ⌄',1],['calc','New<br>measure'],['quick','Quick<br>measure']]],
 ['g-sens','Sensitivity',[['sens','Sensitivity<br>⌄',1]]],
 ['g-one','Share',[['publish','Publish']]],
 ['g-one','Copilot',[['copilot','Copilot']]]];
const gal = 'bh bv bh2 bv2 bh combo line area slic four tools four funnel dark tools ring blue blue'.split(' ');
const gallery = `<div class="gallery d-flex"><div class="gallery-grid">${gal.map(g => ic(g,'ic-s')).join('')}</div><button class="gallery-more" aria-label="Meer">⌄</button></div>`;
$('ribbon').insertAdjacentHTML('beforeend', groups.map(([c,n,t]) => `<section class="grp ${c}"><div class="grp-body d-flex justify-content-evenly">${t.map(b => b === 'gallery' ? gallery : `<button class="tool${b[2] ? ' dim' : ''}">${ic(b[0],'ic-l')}<span>${b[1]}</span></button>`).join('')}</div><div class="grp-name">${n}</div></section>`).join(''));

const fields = ['---- Marktomvang | absolute cijfers ---','Werkzame beroepsbevolking','Aantal kinderen in gekozen jaar','Aantal kinderen 0 jr in gekozen jaar','Aantal kinderen 4 jr in gekozen jaar','Aantal kinderen in jaar: t+3','Aantal kinderen in jaar: t+5','Aantal kinderen in jaar: t+10','Aantal kinderen 0 jr in jaar: t+3','Aantal kinderen 0 jr in jaar: t+5','Aantal kinderen 0 jr in jaar: t+10','Aantal kinderen 4 jr in jaar: t+3','Aantal kinderen 4 jr in jaar: t+5','Aantal kinderen 4 jr in jaar: t+10','Aantal inwoners','Aantal inwoners man','Aantal inwoners vrouw','Kinderen recht op kinderopvangtoeslag (KOT)','Migranten','Westerse migranten','Niet westerse migranten','Aantal huishoudens','Aantal huishoudens met kinderen tot 13 jaar','Aantal jonge gezinnen (max. 45 jaar)','Huishoudens die nog moeten kiezen voor de basisschool','Gemiddelde omvang huishoudens','Gem. woonduur huishoudens met kinderen (0-13)','Gem. woonduur huishoudens leeftijd jonge gezinnen (0-45)','Schoolgaande kinderen','Gem. aandeel toeslag per huishouden'];
$('fields').innerHTML = fields.map(f => `<label><input type="checkbox" class="box">${f}</label>`).join('');

const places = 'Aa en Hunze,Aalsmeer,Aalten,Achtkarspelen,Alblasserdam,Albrandswaard,Alkmaar,Almelo,Almere,Alphen aan den Rijn,Alphen-Chaam,Altena,Ameland,Amersfoort,Amstelveen,Amsterdam,Apeldoorn,Arnhem,Assen,Asten,Baarle-Nassau,Baarn,Barendrecht,Barneveld,Beek (L.),Beekdaelen,Beesel,Berg en Dal,Bergeijk,Bergen (L.),Bergen (NH.),Bergen op Zoom,Berkelland,Bernheze,Best'.split(',');
$('tree').innerHTML = places.map(p => `<label>${ic('chev-r','ic-s')}<input type="checkbox" class="box"${p === 'Alkmaar' ? ' checked' : ''}><span>${p}</span></label>`).join('');

$('fcards').innerHTML = ['buurtnaam','gemeentenaam','wijknaam'].map(n => `<div class="fcard">Related ${n}<div class="d-flex justify-content-between align-items-center">is (All)${ic('eyeoff','ic-s')}</div></div>`).join('');
$('s1').innerHTML = 'bh bv bh2 bv2 bh bv line area area2 area2 combo combo ribb wfall fun scat pie donut treemap globe map map2 nav gauge card1 card2 kpi slic tbl mtx tR tPy infl deco qa doc cup pag oslic oslic2 oslic2 oslic2 pin dia flow more'.split(' ').map((n,i) => ic(n, i === 41 ? 'ic-m chosen' : n === 'more' ? 'ic-s' : 'ic-m')).join('');
$('s2').innerHTML = 'ring four tools four funnel dark tools ring blue blue'.split(' ').map(n => ic(n)).join('');
$('rel').innerHTML = ['geme...','gem...','wijkn...','buur...'].map((n,i) => `<div class="rel d-flex align-items-center justify-content-between${i ? ' sub' : ''}">Related ${n}<button aria-label="Verwijder">${ic('xx','ic-s')}</button></div>`).join('');
document.querySelectorAll('.sp').forEach(s => s.innerHTML = ic('chev-u','tick') + ic('chev-d','tick'));
</script>
<script src="https://cdn.jsdelivr.net/npm/bootstrap@5.3.0/dist/js/bootstrap.bundle.min.js"></script>
</body>
</html>
